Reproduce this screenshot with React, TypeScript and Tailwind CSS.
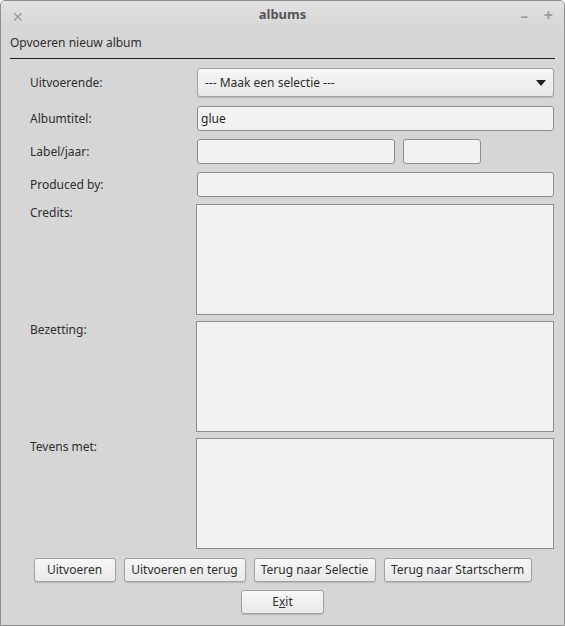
import React from "react";

const font = { fontFamily: '"Noto Sans", "Open Sans", sans-serif' };

function Btn({ children, w }: { children: React.ReactNode; w: string }) {
  return (
    <button
      className={`${w} h-[24px] rounded-[3px] border border-[#a3a3a3] bg-gradient-to-b from-[#f7f7f7] to-[#e8e8e8] text-[12px] text-[#2e2e2e] shadow-[0_1px_1px_rgba(0,0,0,0.15)]`}
    >
      {children}
    </button>
  );
}

function Row({ label, children }: { label: string; children: React.ReactNode }) {
  return (
    <div className="flex items-center">
      <div className="w-[167px] shrink-0 text-[12px] text-[#2e2e2e]">{label}</div>
      {children}
    </div>
  );
}

function Area({ label }: { label: string }) {
  return (
    <div className="flex items-start">
      <div className="w-[166px] shrink-0 text-[12px] leading-[18px] text-[#2e2e2e]">{label}</div>
      <div className="w-[358px] h-[111px] shrink-0 border border-[#8e8e8e] bg-[#f2f2f2]" />
    </div>
  );
}

export default function App() {
  return (
    <div
      style={font}
      className="w-[565px] h-[626px] overflow-hidden rounded-t-[5px] border border-[#8f8f8f] bg-[#d6d6d6] flex flex-col"
    >
      <div className="relative h-[27px] flex items-center justify-center bg-gradient-to-b from-[#e2e2e2] to-[#d6d6d6]">
        <span className="absolute left-[11px] top-[5px] text-[14px] text-[#9a9a9a]">✕</span>
        <span className="text-[13px] font-bold text-[#555]">albums</span>
        <span className="absolute right-[36px] top-[3px] text-[15px] font-bold text-[#9a9a9a]">–</span>
        <span className="absolute right-[11px] top-[2px] text-[16px] font-bold text-[#9a9a9a]">+</span>
      </div>

      <div className="pl-[9px] pr-[9px]">
        <div className="pt-[6px] pb-[6px] border-b border-[#1e1e1e] text-[12px] leading-[18px] text-[#2e2e2e]">
          Opvoeren nieuw album
        </div>
      </div>

      <div className="pl-[29px] pr-[9px] pt-[9px] flex flex-col">
        <Row label="Uitvoerende:">
          <div className="w-[357px] h-[29px] shrink-0 rounded-[3px] border border-[#a3a3a3] bg-gradient-to-b from-[#f7f7f7] to-[#e8e8e8] shadow-[0_1px_1px_rgba(0,0,0,0.15)] flex items-center justify-between pl-[7px] pr-[7px] text-[12px] text-[#2e2e2e]">
            <span>--- Maak een selectie ---</span>
            <svg width="10" height="6" viewBox="0 0 10 6">
              <path d="M0 0 H10 L5 6 Z" fill="#222" />
            </svg>
          </div>
        </Row>
        <div className="mt-[9px]">
          <Row label="Albumtitel:">
            <div className="w-[357px] h-[25px] shrink-0 rounded-[3px] border border-[#8e8e8e] bg-[#f2f2f2] flex items-center pl-[3px] text-[12px] text-[#1e1e1e]">
              glue
            </div>
          </Row>
        </div>
        <div className="mt-[8px]">
          <Row label="Label/jaar:">
            <div className="flex gap-[8px]">
              <div className="w-[198px] h-[25px] rounded-[3px] border border-[#8e8e8e] bg-[#f2f2f2]" />
              <div className="w-[78px] h-[25px] rounded-[3px] border border-[#8e8e8e] bg-[#f2f2f2]" />
            </div>
          </Row>
        </div>
        <div className="mt-[8px]">
          <Row label="Produced by:">
            <div className="w-[357px] h-[25px] shrink-0 rounded-[3px] border border-[#8e8e8e] bg-[#f2f2f2]" />
          </Row>
        </div>
        <div className="mt-[7px] flex flex-col gap-[6px]">
          <Area label="Credits:" />
          <Area label="Bezetting:" />
          <Area label="Tevens met:" />
        </div>
      </div>

      <div className="mt-[9px] flex justify-center gap-[8px]">
        <Btn w="w-[82px]">Uitvoeren</Btn>
        <Btn w="w-[122px]">Uitvoeren en terug</Btn>
        <Btn w="w-[122px]">Terug naar Selectie</Btn>
        <Btn w="w-[148px]">Terug naar Startscherm</Btn>
      </div>
      <div className="mt-[8px] flex justify-center">
        <Btn w="w-[83px]">
          E<span className="underline">x</span>it
        </Btn>
      </div>
    </div>
  );
}
